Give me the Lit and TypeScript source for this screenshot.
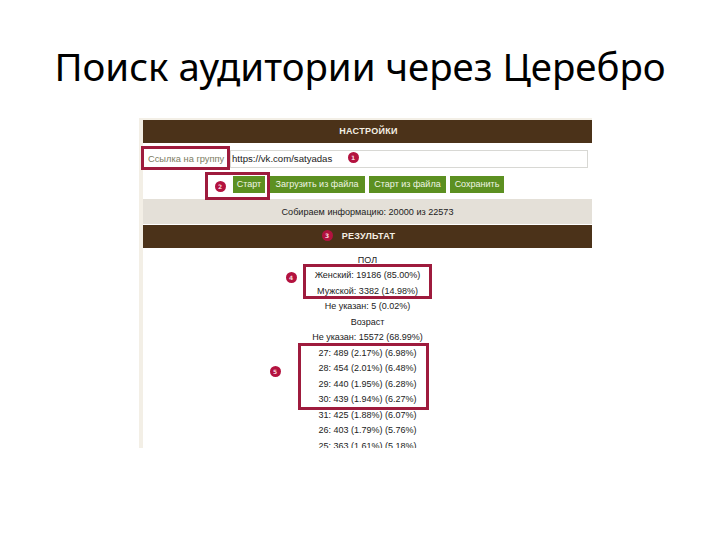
import { LitElement, html, css } from "lit";
import { customElement } from "lit/decorators.js";

const lines = [
  "ПОЛ",
  "Женский: 19186 (85.00%)",
  "Мужской: 3382 (14.98%)",
  "Не указан: 5 (0.02%)",
  "Возраст",
  "Не указан: 15572 (68.99%)",
  "27: 489 (2.17%) (6.98%)",
  "28: 454 (2.01%) (6.48%)",
  "29: 440 (1.95%) (6.28%)",
  "30: 439 (1.94%) (6.27%)",
  "31: 425 (1.88%) (6.07%)",
  "26: 403 (1.79%) (5.76%)",
  "25: 363 (1.61%) (5.18%)",
];

const marks = [
  { n: "1", x: 353, y: 157 },
  { n: "2", x: 220, y: 186 },
  { n: "3", x: 327, y: 235 },
  { n: "4", x: 291, y: 277 },
  { n: "5", x: 275, y: 371 },
];

const boxes = [
  { x: 141, y: 146, w: 89, h: 24 },
  { x: 205, y: 172, w: 65, h: 28 },
  { x: 303, y: 264, w: 129, h: 35 },
  { x: 298, y: 343, w: 131, h: 67 },
];

@customElement("app-root")
export class AppRoot extends LitElement {
  static styles = css`
    :host {
      display: block;
      width: 720px;
      height: 540px;
      background: #fff;
      overflow: hidden;
      position: relative;
    }
    .title {
      height: 118px;
      box-sizing: border-box;
      padding-top: 39px;
      text-align: center;
      font: 38.4px/54px "Noto Sans", sans-serif;
      color: #000;
      white-space: nowrap;
    }
    .shot {
      margin-left: 139px;
      width: 453px;
      height: 330px;
      overflow: hidden;
      background: #f3efe6;
      padding: 2px 0 0 4px;
      box-sizing: border-box;
      font-family: "Liberation Sans", sans-serif;
    }
    .inner {
      background: #fff;
    }
    .bar {
      height: 23px;
      background: #4b3219;
      color: #f4efe4;
      font-size: 9px;
      font-weight: 700;
      line-height: 23px;
      text-align: center;
      padding-left: 2px;
      letter-spacing: 0.3px;
    }
    .field {
      display: flex;
      align-items: center;
      height: 18px;
      margin-top: 7px;
      padding-left: 5px;
    }
    .label {
      width: 82px;
      flex: none;
      color: #7c7c62;
      font-size: 9.3px;
      white-space: nowrap;
    }
    .input {
      width: 358px;
      height: 18px;
      box-sizing: border-box;
      border: 1px solid #d8d8d4;
      padding-left: 1px;
      font-size: 9.6px;
      line-height: 16px;
      color: #222;
    }
    .buttons {
      display: flex;
      gap: 4px;
      margin-top: 8px;
      padding-left: 90px;
    }
    .btn {
      height: 17px;
      box-sizing: border-box;
      background: #5c9021;
      color: #f0f5e4;
      font-size: 9px;
      line-height: 17px;
      text-align: center;
    }
    .status {
      height: 25px;
      margin-top: 6px;
      background: #e4e0d8;
      color: #222;
      font-size: 9.1px;
      line-height: 26px;
      text-align: center;
    }
    .bar.second {
      margin-top: 1px;
    }
    .results {
      padding-top: 4.5px;
      text-align: center;
      color: #222;
      font-size: 9px;
      line-height: 15.5px;
    }
    .box {
      position: absolute;
      box-sizing: border-box;
      border: 3px solid #9e1b3d;
    }
    .mark {
      position: absolute;
      width: 11px;
      height: 11px;
      margin: -5.5px 0 0 -5.5px;
      border-radius: 50%;
      background: #b3123f;
      color: #f6d5dc;
      font: 700 6px/11px "DejaVu Sans", sans-serif;
      text-align: center;
    }
  `;

  render() {
    return html`
      <div class="title">Поиск аудитории через Церебро</div>
      <div class="shot">
        <div class="inner">
          <div class="bar">НАСТРОЙКИ</div>
          <div class="field">
            <div class="label">Ссылка на группу</div>
            <div class="input">https://vk.com/satyadas</div>
          </div>
          <div class="buttons">
            <div class="btn" style="width:32px">Старт</div>
            <div class="btn" style="width:96px">Загрузить из файла</div>
            <div class="btn" style="width:77px">Старт из файла</div>
            <div class="btn" style="width:54px">Сохранить</div>
          </div>
          <div class="status">Собираем информацию: 20000 из 22573</div>
          <div class="bar second">РЕЗУЛЬТАТ</div>
          <div class="results">${lines.map((l) => html`<div>${l}</div>`)}</div>
        </div>
      </div>
      ${boxes.map(
        (b) => html`<div class="box" style="left:${b.x}px;top:${b.y}px;width:${b.w}px;height:${b.h}px"></div>`
      )}
      ${marks.map(
        (m) => html`<div class="mark" style="left:${m.x}px;top:${m.y}px">${m.n}</div>`
      )}
    `;
  }
}
